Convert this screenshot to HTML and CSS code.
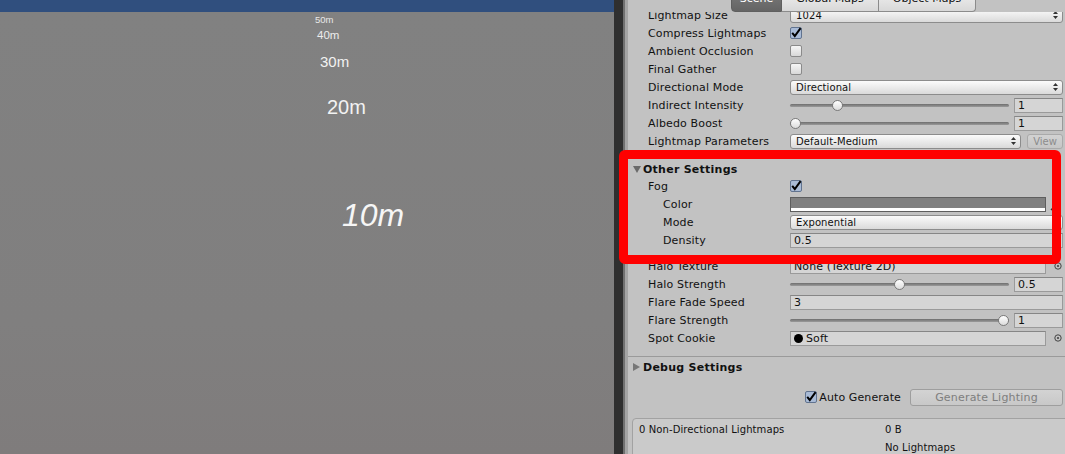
FILE: index.html
```html
<!DOCTYPE html>
<html>
<head>
<meta charset="utf-8">
<title>Lighting</title>
<link rel="stylesheet" href="styles.css">
</head>
<body>
<div class="app">
  <section class="scene">
    <div class="scene-bar"></div>
    <div class="scene-view">
      <span class="dist d50">50m</span>
      <span class="dist d40">40m</span>
      <span class="dist d30">30m</span>
      <span class="dist d20">20m</span>
      <span class="dist d10">10m</span>
    </div>
  </section>
  <div class="splitter"></div>
  <section class="inspector">
    <div class="tabs">
      <div class="tab active">Scene</div>
      <div class="tab">Global Maps</div>
      <div class="tab last">Object Maps</div>
    </div>
    <div class="scroll">
      <div class="scroll-inner">
        <div class="row"><span class="label">Lightmap Size</span>
          <div class="popup"><span>1024</span><svg class="arr" width="5" height="8" viewBox="0 0 5 8"><path d="M2.5 0L5 3H0Z M0 5H5L2.5 8Z" fill="#333"/></svg></div></div>
        <div class="row"><span class="label">Compress Lightmaps</span>
          <span class="cb on"><svg width="12" height="12" viewBox="0 0 12 12"><path d="M2.2 5.8L4.8 9L10.6 1.2" fill="none" stroke="#000" stroke-width="2"/></svg></span></div>
        <div class="row"><span class="label">Ambient Occlusion</span><span class="cb"></span></div>
        <div class="row"><span class="label">Final Gather</span><span class="cb"></span></div>
        <div class="row"><span class="label">Directional Mode</span>
          <div class="popup"><span>Directional</span><svg class="arr" width="5" height="8" viewBox="0 0 5 8"><path d="M2.5 0L5 3H0Z M0 5H5L2.5 8Z" fill="#333"/></svg></div></div>
        <div class="row"><span class="label">Indirect Intensity</span>
          <div class="slider"><div class="track"><span class="thumb" style="--p:0.2"></span></div><div class="num">1</div></div></div>
        <div class="row"><span class="label">Albedo Boost</span>
          <div class="slider"><div class="track"><span class="thumb" style="--p:0"></span></div><div class="num">1</div></div></div>
        <div class="row"><span class="label">Lightmap Parameters</span>
          <div class="popup-view"><div class="popup"><span>Default-Medium</span><svg class="arr" width="5" height="8" viewBox="0 0 5 8"><path d="M2.5 0L5 3H0Z M0 5H5L2.5 8Z" fill="#333"/></svg></div><div class="btn-view">View</div></div></div>

        <div class="foldout first"><span class="tri down"></span>Other Settings</div>
        <div class="row"><span class="label">Fog</span>
          <span class="cb on"><svg width="12" height="12" viewBox="0 0 12 12"><path d="M2.2 5.8L4.8 9L10.6 1.2" fill="none" stroke="#000" stroke-width="2"/></svg></span></div>
        <div class="row"><span class="label sub">Color</span>
          <div class="color-field"><div class="swatch"><span class="alpha"></span></div>
            <span class="picker"><svg width="9" height="9" viewBox="0 0 9 9"><path d="M1 8L6 3" stroke="#333" stroke-width="1.4"/><path d="M5.5 1.5L7.5 3.5" stroke="#333" stroke-width="2"/></svg></span></div></div>
        <div class="row"><span class="label sub">Mode</span>
          <div class="popup"><span>Exponential</span><svg class="arr" width="5" height="8" viewBox="0 0 5 8"><path d="M2.5 0L5 3H0Z M0 5H5L2.5 8Z" fill="#333"/></svg></div></div>
        <div class="row"><span class="label sub">Density</span><div class="text-field">0.5</div></div>

        <div class="space"></div>
        <div class="row"><span class="label">Halo Texture</span>
          <div class="obj"><div class="obj-box">None (Texture 2D)</div><span class="target"><svg width="8" height="8" viewBox="0 0 8 8"><circle cx="4" cy="4" r="3.2" fill="none" stroke="#444" stroke-width="1"/><circle cx="4" cy="4" r="1.1" fill="#444"/></svg></span></div></div>
        <div class="row"><span class="label">Halo Strength</span>
          <div class="slider"><div class="track"><span class="thumb" style="--p:0.5"></span></div><div class="num">0.5</div></div></div>
        <div class="row"><span class="label">Flare Fade Speed</span><div class="text-field">3</div></div>
        <div class="row"><span class="label">Flare Strength</span>
          <div class="slider"><div class="track"><span class="thumb" style="--p:1"></span></div><div class="num">1</div></div></div>
        <div class="row"><span class="label">Spot Cookie</span>
          <div class="obj"><div class="obj-box"><span class="dot"></span>Soft</div><span class="target"><svg width="8" height="8" viewBox="0 0 8 8"><circle cx="4" cy="4" r="3.2" fill="none" stroke="#444" stroke-width="1"/><circle cx="4" cy="4" r="1.1" fill="#444"/></svg></span></div></div>

        <div class="sep"></div>
        <div class="foldout debug"><span class="tri right"></span>Debug Settings</div>

        <div class="gen-row">
          <div class="auto"><span class="cb on"><svg width="12" height="12" viewBox="0 0 12 12"><path d="M2.2 5.8L4.8 9L10.6 1.2" fill="none" stroke="#000" stroke-width="2"/></svg></span><span class="auto-label">Auto Generate</span></div>
          <div class="btn-gen">Generate Lighting</div>
        </div>

        <div class="stats">
          <span>0 Non-Directional Lightmaps</span><span>0 B</span>
          <span></span><span>No Lightmaps</span>
        </div>
      </div>
    </div>
  </section>
  <div class="annot"></div>
</div>
</body>
</html>
```

FILE: styles.css
```css
* { box-sizing: border-box; margin: 0; padding: 0; }
html, body { width: 1065px; height: 454px; overflow: hidden; }
body {
  font-family: "DejaVu Sans", "Liberation Sans", sans-serif;
  font-size: 11px;
  color: #111;
  background: #c2c2c2;
}
.app { position: relative; display: flex; width: 1065px; height: 454px; }

/* scene view */
.scene { width: 614px; flex: none; display: flex; flex-direction: column; }
.scene-bar { height: 12px; background: #304f7e; flex: none; }
.scene-view {
  flex: 1;
  position: relative;
  background: linear-gradient(#818181, #807f7f 70%, #7f7c7c);
  font-family: "Liberation Sans", Arial, sans-serif;
  color: #f2f2f2;
}
.dist { position: absolute; line-height: 1; transform: translateY(-50%); white-space: nowrap; }
.d50 { left: 315px; top: 8px; font-size: 9.5px; color: #e8e8e8; }
.d40 { left: 317px; top: 24px; font-size: 11.5px; color: #ececec; }
.d30 { left: 320px; top: 49px; font-size: 15px; }
.d20 { left: 327px; top: 94.5px; font-size: 20px; }
.d10 { left: 342px; top: 203px; font-size: 32px; font-style: italic; color: #f6f6f6; }

.splitter { width: 9px; flex: none; background: #2f2f2f; }

/* inspector */
.inspector {
  flex: 1;
  display: flex;
  flex-direction: column;
  padding-left: 5px;
  background: linear-gradient(to right, #707070 0 2px, #a4a4a4 2px 5px, #c2c2c2 5px);
  overflow: hidden;
}
.tabs {
  height: 12px;
  flex: none;
  display: flex;
  align-items: flex-end;
  padding-left: 103px;
  overflow: hidden;
}
.tab {
  width: 97px;
  height: 22px;
  line-height: 16px;
  text-align: center;
  border: 1px solid #8b8b8b;
  border-left: none;
  background: linear-gradient(#f0f0f0, #d8d8d8);
  color: #111;
  white-space: nowrap;
}
.tab.active {
  width: 51px;
  border-left: 1px solid #6a6a6a;
  border-color: #5f5f5f;
  background: linear-gradient(#7a7a7a, #646464);
  color: #fff;
  border-bottom-left-radius: 4px;
}
.tab.last { border-bottom-right-radius: 4px; }

.scroll { flex: 1; overflow: hidden; }
.scroll-inner { margin-top: -6px; }

.row {
  display: grid;
  grid-template-columns: 162px 1fr;
  align-items: center;
  height: 18px;
  padding-right: 2px;
}
.label { padding-left: 20px; letter-spacing: 0.15px; white-space: nowrap; }
.label.sub { padding-left: 35px; }

.popup {
  height: 15px;
  border: 1px solid #8c8c8c;
  border-radius: 3px;
  background: linear-gradient(#fbfbfb, #dadada);
  font-size: 10px;
  letter-spacing: 0.1px;
  padding: 0 4px 0 5px;
  display: flex;
  align-items: center;
  justify-content: space-between;
  white-space: nowrap;
}
.arr { flex: none; }

.popup-view { display: flex; gap: 6px; }
.popup-view .popup { flex: 1; }
.btn-view {
  width: 36px;
  height: 15px;
  border: 1px solid #aaaaaa;
  border-radius: 3px;
  background: linear-gradient(#d2d2d2, #c6c6c6);
  color: #8c8c8c;
  font-size: 10px;
  text-align: center;
  line-height: 13px;
}

.cb {
  width: 12px;
  height: 12px;
  border: 1px solid #8a8a8a;
  border-radius: 2px;
  background: linear-gradient(#f6f6f6, #d8d8d8);
  display: block;
  position: relative;
}
.cb.on { background: #a9bbd6; border-color: #61738f; }
.cb svg { position: absolute; left: -1px; top: -1px; }

.slider { display: flex; align-items: center; gap: 5px; }
.track { flex: 1; position: relative; height: 15px; }
.track::before {
  content: "";
  position: absolute;
  left: 0; right: 0; top: 6px;
  height: 3px;
  border-radius: 2px;
  background: linear-gradient(#6e6e6e, #9a9a9a);
}
.thumb {
  position: absolute;
  top: 2px;
  left: calc(var(--p) * (100% - 11px));
  width: 11px;
  height: 11px;
  border-radius: 50%;
  border: 1px solid #7a7a7a;
  background: linear-gradient(#ffffff, #dcdcdc);
}
.num, .text-field, .obj-box {
  height: 15px;
  border: 1px solid #9a9a9a;
  border-top-color: #868686;
  background: #d5d5d5;
  padding-left: 3px;
  line-height: 13px;
  font-size: 11px;
  letter-spacing: 0.1px;
  white-space: nowrap;
  overflow: hidden;
}
.num { width: 49px; flex: none; }

.color-field { display: flex; align-items: center; }
.swatch {
  flex: 1;
  height: 15px;
  border: 1px solid #5e5e5e;
  background: #808080;
  position: relative;
}
.alpha { position: absolute; left: 0; right: 0; bottom: 0; height: 3px; background: #fff; }
.picker { width: 17px; flex: none; display: flex; justify-content: center; padding-top: 4px; }

.obj { display: flex; align-items: center; }
.obj-box { flex: 1; display: flex; align-items: center; }
.target { width: 17px; flex: none; display: flex; padding-left: 8px; }
.dot { width: 9px; height: 9px; border-radius: 50%; background: #000; margin-right: 3px; }

.foldout {
  display: flex;
  align-items: center;
  height: 16px;
  padding-left: 5px;
  font-weight: bold;
  letter-spacing: 0.25px;
}
.foldout.first { margin-top: 11px; }
.foldout.debug { margin-top: 2px; }
.tri { width: 8px; height: 8px; margin-right: 2px; display: block; }
.tri.down { border-left: 4px solid transparent; border-right: 4px solid transparent; border-top: 7px solid #6a6a6a; height: 7px; }
.tri.right { border-top: 4px solid transparent; border-bottom: 4px solid transparent; border-left: 7px solid #777; width: 7px; margin-right: 3px; }

.space { height: 8px; }
.sep { margin-top: 9px; height: 1px; background: #9a9a9a; }

.gen-row {
  margin-top: 13px;
  height: 18px;
  display: flex;
  justify-content: flex-end;
  align-items: center;
  padding-right: 2px;
}
.auto { display: flex; align-items: center; gap: 2px; margin-right: 9px; }
.auto-label { letter-spacing: 0.1px; }
.btn-gen {
  width: 153px;
  height: 17px;
  border: 1px solid #9e9e9e;
  border-radius: 3px;
  background: linear-gradient(#d3d3d3, #c8c8c8);
  color: #7e7e7e;
  text-align: center;
  line-height: 15px;
  letter-spacing: 0.2px;
}

.stats {
  margin: 12px -10px 0 4px;
  height: 60px;
  border: 1px solid #a2a2a2;
  border-radius: 4px;
  background: #cacaca;
  display: grid;
  grid-template-columns: 246px 1fr;
  grid-auto-rows: 18px;
  align-items: center;
  padding: 1px 0 0 6px;
  font-size: 10px;
  letter-spacing: 0.1px;
}

/* annotation overlay */
.annot {
  position: absolute;
  left: 619px;
  top: 150px;
  width: 442px;
  height: 114px;
  border: 9px solid #ff0000;
  border-radius: 6px;
  pointer-events: none;
}
```
